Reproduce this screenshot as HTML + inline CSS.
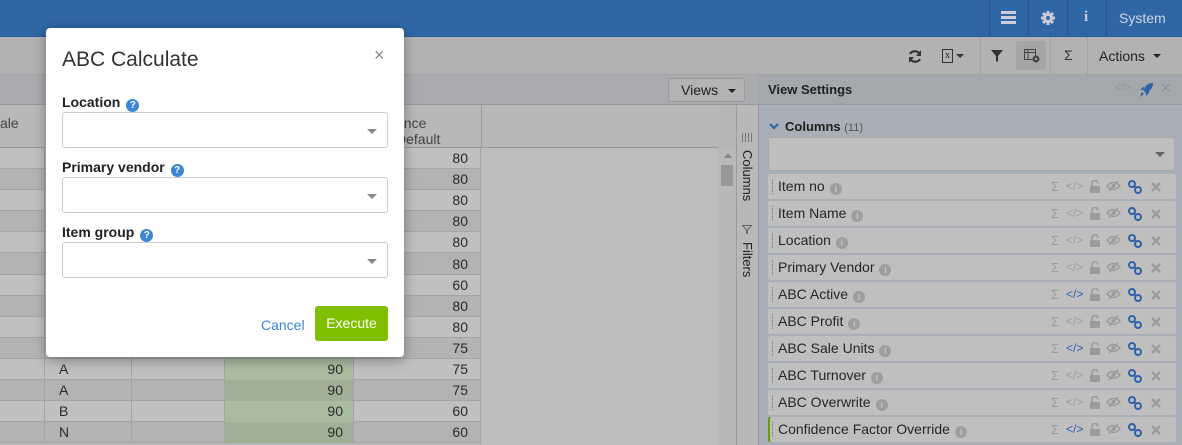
<!DOCTYPE html>
<html><head><meta charset="utf-8"><style>
*{box-sizing:border-box;margin:0;padding:0}
body{width:1182px;height:445px;overflow:hidden;position:relative;background:#b6b6b6;font-family:"Liberation Sans","DejaVu Sans",sans-serif;font-size:13px;color:#222}
.abs{position:absolute}
.top{left:0;top:0;width:1182px;height:37px;background:#2f66a5;border-bottom:1px solid #2a5c95}
.top .sep{position:absolute;top:0;width:1px;height:36px;background:#25548a}
.tb{left:0;top:37px;width:1182px;height:38px;background:#b2b2b2;border-bottom:1px solid #a3a3a3}
.row3{left:0;top:75px;width:758px;height:30px;background:#a9abae;border-bottom:1px solid #999}
.thead{left:0;top:105px;width:718px;height:43px;background:#b8b8b8;border-bottom:1px solid #9a9a9a}
.tr{position:absolute;left:0;width:481px;height:21px;border-bottom:1px solid #a5a5a5}
.tr div{position:absolute;top:0;height:21px;border-right:1px solid #a5a5a5;font-size:14px;line-height:21px;color:#2a2a2a}
.vs{left:758px;top:75px;width:424px;height:370px;background:#a8afb8;border-left:1px solid #999}
.vsh{left:758px;top:75px;width:424px;height:30px;background:#a4a8ad;border-bottom:1px solid #969aa0}
.item{position:absolute;left:768px;width:408px;height:25px;background:#bfbfbf;border-radius:2px;font-size:14px;line-height:25px;color:#262626}
.item .d{position:absolute;left:4px;top:5px;height:15px;border-left:1px dotted #777}
.item .t{position:absolute;left:10px;top:0}
.info{display:inline-block;width:12px;height:12px;border-radius:50%;background:#9e9e9e;color:#c4c4c4;font-size:9px;line-height:12px;text-align:center;font-weight:bold;vertical-align:-1px;margin-left:5px}
.ic{position:absolute;top:0;font-size:12px;color:#9b9b9b}
.ic svg{position:absolute;top:6px;left:0}
.modal{left:46px;top:28px;width:358px;height:329px;background:#fff;border-radius:4px;box-shadow:0 3px 12px rgba(0,0,0,.35)}
.lbl{position:absolute;left:16px;font-weight:bold;font-size:14px;color:#222}
.q{display:inline-block;width:13px;height:13px;border-radius:50%;background:#3b86d6;color:#fff;font-size:10px;line-height:13px;text-align:center;margin-left:6px;vertical-align:-1px}
.sel{position:absolute;left:16px;width:326px;height:36px;border:1px solid #ccc;border-radius:3px}
.sel:after{content:"";position:absolute;right:10px;top:16px;border:5px solid transparent;border-top:5px solid #888;border-bottom:0}
</style></head><body>
<div class="abs top">
<div class="sep" style="left:989px"></div><div class="sep" style="left:1028px"></div><div class="sep" style="left:1067px"></div><div class="sep" style="left:1106px"></div>
<svg class="abs" style="left:1001px;top:11px" width="15" height="13"><rect x="0" y="0" width="15" height="3" fill="#ccd"/><rect x="0" y="5" width="15" height="3" fill="#ccd"/><rect x="0" y="10" width="15" height="3" fill="#ccd"/></svg>
<svg class="abs" style="left:1041px;top:11px" width="14" height="14"><circle cx="7" cy="7" r="5" fill="#ccd"/><circle cx="7" cy="7" r="2" fill="#2f66a5"/><g stroke="#ccd" stroke-width="3"><path d="M7 0V14M0 7H14M2 2L12 12M12 2L2 12"/></g><circle cx="7" cy="7" r="2" fill="#2f66a5"/></svg>
<div class="abs" style="left:1084px;top:9px;color:#ccd;font-weight:bold;font-size:15px;font-family:'Liberation Serif',serif">i</div>
<div class="abs" style="left:1119px;top:10px;color:#cfd6e0;font-size:14px">System</div>
</div>
<div class="abs tb">
<div class="abs" style="left:980px;top:0;width:1px;height:37px;background:#a2a2a2"></div>
<div class="abs" style="left:1050px;top:0;width:1px;height:37px;background:#a2a2a2"></div>
<div class="abs" style="left:1087px;top:0;width:1px;height:37px;background:#a2a2a2"></div>
<svg class="abs" style="left:908px;top:13px" width="14" height="13"><path d="M12 5A5.5 5.5 0 0 0 2 4M2 8A5.5 5.5 0 0 0 12 9" fill="none" stroke="#333" stroke-width="2.2"/><path d="M13 0V6H8Z M1 13V7H6Z" fill="#333"/></svg>
<div class="abs" style="left:942px;top:12px;width:11px;height:14px;border:1px solid #333;font-size:10px;line-height:12px;text-align:center;font-family:'Liberation Serif',serif">x</div>
<div class="abs" style="left:956px;top:17px;border:4px solid transparent;border-top:4px solid #333"></div>
<svg class="abs" style="left:991px;top:13px" width="12" height="12"><path d="M0 0H12L7 6V12L5 11V6Z" fill="#333"/></svg>
<div class="abs" style="left:1016px;top:4px;width:30px;height:29px;background:#a3a5a7;border-radius:3px"></div>
<svg class="abs" style="left:1024px;top:12px" width="16" height="14"><rect x="0.5" y="0.5" width="11" height="10" fill="none" stroke="#444"/><path d="M0.5 3.5H11.5M4 0.5V10.5" stroke="#444"/><circle cx="12" cy="10" r="3.5" fill="#444"/><circle cx="12" cy="10" r="1.2" fill="#a3a5a7"/></svg>
<div class="abs" style="left:1064px;top:10px;font-size:14px;color:#333">Σ</div>
<div class="abs" style="left:1099px;top:11px;font-size:14px;color:#222">Actions</div>
<div class="abs" style="left:1153px;top:17px;border:4px solid transparent;border-top:4px solid #222"></div>
</div>
<div class="abs row3"></div>
<div class="abs" style="left:668px;top:78px;width:77px;height:24px;background:#b3b3b3;border:1px solid #999;border-radius:3px;font-size:14px;line-height:22px;padding-left:12px;color:#222">Views <span style="display:inline-block;margin-left:6px;vertical-align:2px;border:4px solid transparent;border-top:4px solid #222;border-bottom:0"></span></div>
<div class="abs thead">
<div class="abs" style="left:0;top:10px;font-size:14px;color:#444">ale</div>
<div class="abs" style="left:396px;top:10px;font-size:14px;color:#444;line-height:16px">ence<br>Default</div>
<div class="abs" style="left:481px;top:0;width:1px;height:43px;background:#9a9a9a"></div>
</div>
<div id="rows"></div>
<div class="abs" style="left:481px;top:148px;width:237px;height:297px;background:#bdbdbd"></div>
<div class="abs" style="left:718px;top:148px;width:18px;height:297px;background:#b8b8b8"></div>
<div class="abs" style="left:724px;top:153px;border:4px solid transparent;border-bottom:5px solid #888;border-top:0"></div>
<div class="abs" style="left:721px;top:165px;width:12px;height:21px;background:#989898"></div>
<div class="abs" style="left:736px;top:105px;width:22px;height:340px;background:#b8b8b8;border-left:1px solid #9c9c9c"></div>
<svg class="abs" style="left:742px;top:133px" width="10" height="9"><path d="M0.5 0V9M3.5 0V9M6.5 0V9M9.5 0V9" stroke="#777"/></svg>
<div class="abs" style="left:740px;top:150px;writing-mode:vertical-rl;font-size:13px;color:#222">Columns</div>
<svg class="abs" style="left:742px;top:225px" width="10" height="9"><path d="M0.5 0.5H9.5L5.5 5V8.5L4.5 8V5Z" fill="none" stroke="#666"/></svg>
<div class="abs" style="left:740px;top:242px;writing-mode:vertical-rl;font-size:13px;color:#222">Filters</div>
<div class="abs vs"></div>
<div class="abs vsh">
<div class="abs" style="left:10px;top:7px;font-weight:bold;font-size:13px;color:#1f1f1f">View Settings</div>
<div class="abs" style="left:357px;top:7px;font-size:11px;color:#8d939a">&lt;/&gt;</div>
<svg class="abs" style="left:381px;top:8px" width="14" height="14"><path d="M14 0C9 0 6 3 4 7L7 10C11 8 14 5 14 0Z M4 7L1 7L4 4L7 4Z M7 10L7 13L10 10L10 7Z M3 9L5 11L1 14Z" fill="#2e63a8"/></svg>
<div class="abs" style="left:402px;top:5px;font-size:14px;color:#8d939a;font-weight:bold">✕</div>
</div>
<svg class="abs" style="left:769px;top:123px" width="10" height="7"><path d="M1 1L5 5L9 1" fill="none" stroke="#2e63a8" stroke-width="2.2"/></svg>
<div class="abs" style="left:785px;top:119px;font-weight:bold;font-size:13px;color:#1f1f1f">Columns <span style="font-weight:normal;font-size:11px;color:#555">(11)</span></div>
<div class="abs" style="left:768px;top:137px;width:407px;height:34px;background:#bebebe;border:1px solid #a8a8a8;border-radius:3px"><div class="abs" style="right:9px;top:14px;border:5px solid transparent;border-top:5px solid #666;border-bottom:0"></div></div>
<div id="items"></div>
<div class="abs modal">
<div class="abs" style="left:16px;top:20px;font-size:21px;color:#333">ABC Calculate</div>
<div class="abs" style="left:328px;top:17px;font-size:18px;color:#888">×</div>
<div class="lbl" style="top:66px">Location<span class="q">?</span></div>
<div class="sel" style="top:84px"></div>
<div class="lbl" style="top:131px">Primary vendor<span class="q">?</span></div>
<div class="sel" style="top:149px"></div>
<div class="lbl" style="top:196px">Item group<span class="q">?</span></div>
<div class="sel" style="top:214px"></div>
<div class="abs" style="left:215px;top:289px;font-size:14px;color:#3b86d6">Cancel</div>
<div class="abs" style="left:269px;top:278px;width:73px;height:35px;background:#7fbf00;border-radius:3px;color:#fff;font-size:14px;line-height:35px;text-align:center">Execute</div>
</div>
<script>
var cd=[80,80,80,80,80,80,60,80,80,75,75,75,60,60],le=["","","","","","","","","","","A","A","B","N"],h="";
for(var i=0;i<14;i++){var y=148+i*21.1,bg=i%2?"#b3b3b3":"#c0c0c0",gb=i%2?"#a0b097":"#aabca0";
h+='<div class="tr" style="top:'+y+'px;background:'+bg+'"><div style="left:0;width:45px"></div><div style="left:45px;width:87px;padding-left:14px">'+le[i]+'</div><div style="left:132px;width:93px"></div><div style="left:225px;width:129px;background:'+gb+';text-align:right;padding-right:10px">'+(i>9?90:"")+'</div><div style="left:354px;width:127px;text-align:right;padding-right:12px">'+cd[i]+'</div></div>';}
document.getElementById("rows").innerHTML=h;
var n=["Item no","Item Name","Location","Primary Vendor","ABC Active","ABC Profit","ABC Sale Units","ABC Turnover","ABC Overwrite","Confidence Factor Override"],bl=[4,6,9],g="";
var lock='<svg width="10" height="13"><path d="M2 6V3.5A3 3 0 0 1 8 3.5" fill="none" stroke="#9b9b9b" stroke-width="1.6"/><rect x="0" y="6" width="10" height="7" fill="#9b9b9b"/></svg>';
var eye='<svg width="15" height="12"><path d="M1 6Q7 -1 14 6Q7 13 1 6Z" fill="none" stroke="#9b9b9b" stroke-width="1.4"/><circle cx="7.5" cy="6" r="2" fill="#9b9b9b"/><path d="M3 11L12 1" stroke="#9b9b9b" stroke-width="1.4"/></svg>';
var link='<svg width="14" height="14"><circle cx="4" cy="4" r="3" fill="none" stroke="#2e63a8" stroke-width="2"/><circle cx="10" cy="10" r="3" fill="none" stroke="#2e63a8" stroke-width="2"/><path d="M6 6L8 8" stroke="#2e63a8" stroke-width="2"/></svg>';
var x='<svg width="10" height="10"><path d="M1 1L9 9M9 1L1 9" stroke="#9b9b9b" stroke-width="2.4"/></svg>';
for(var j=0;j<10;j++){var t=174+j*27,c=bl.indexOf(j)>=0?"#2e63a8":"#9b9b9b";
g+='<div class="item" style="top:'+t+'px'+(j==9?';box-shadow:inset 2px 0 0 #6a9a10':'')+'"><span class="d"></span><span class="t">'+n[j]+'<span class="info">i</span></span><span class="ic" style="left:283px;font-size:13px">Σ</span><span class="ic" style="left:298px;color:'+c+'">&lt;/&gt;</span><span class="ic" style="left:322px">'+lock+'</span><span class="ic" style="left:338px">'+eye+'</span><span class="ic" style="left:360px">'+link+'</span><span class="ic" style="left:383px;top:2px">'+x+'</span></div>';}
document.getElementById("items").innerHTML=g;
</script>
</body></html>
